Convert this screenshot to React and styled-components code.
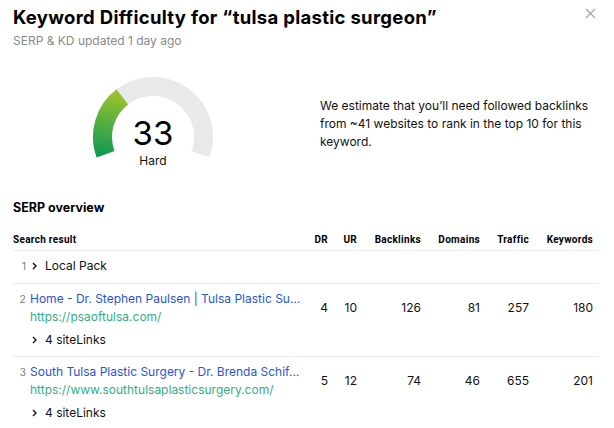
import React from "react";
import styled, { createGlobalStyle } from "styled-components";

const Global = createGlobalStyle`
  html, body { margin: 0; padding: 0; background: #fff; }
  body { font-family: Inter, "Noto Sans", sans-serif; color: #111; }
  * { box-sizing: border-box; }
`;

const Page = styled.div`
  width: 614px;
  height: 428px;
  overflow: hidden;
  padding: 4px 16px 0 13px;
  position: relative;
`;

const Title = styled.h1`
  margin: 0;
  font-family: Inter, "Liberation Sans", sans-serif;
  font-weight: 700;
  font-size: 18.5px;
  line-height: 26px;
  letter-spacing: 0.3px;
  color: #000;
`;

const Subtitle = styled.div`
  margin-top: 2px;
  font-size: 12px;
  line-height: 18px;
  color: #8a8a8a;
`;

const Close = styled.button`
  position: absolute;
  top: 8px;
  right: 18px;
  width: 11px;
  height: 11px;
  padding: 0;
  border: 0;
  background: none;
  display: flex;
`;

const Summary = styled.div`
  display: flex;
  align-items: flex-start;
  margin-top: 25px;
  padding-left: 78px;
  gap: 105px;
`;

const Gauge = styled.div`
  position: relative;
  width: 124px;
  height: 96px;
  flex: none;
`;

const Score = styled.div`
  position: absolute;
  left: 0;
  right: 0;
  top: 38px;
  text-align: center;
  font-size: 33px;
  line-height: 40px;
  color: #000;
`;

const ScoreLabel = styled.div`
  position: absolute;
  left: 0;
  right: 0;
  top: 77px;
  text-align: center;
  font-size: 12px;
  line-height: 18px;
  color: #111;
`;

const Estimate = styled.p`
  margin: 22px 0 0;
  font-size: 12px;
  line-height: 18px;
  color: #111;
  width: 280px;
`;

const SectionTitle = styled.h2`
  margin: 28px 0 0;
  font-family: Inter, "Liberation Sans", sans-serif;
  font-weight: 700;
  font-size: 12.5px;
  line-height: 18px;
  color: #000;
`;

const Table = styled.div`
  margin-top: 16px;
  width: 585px;
`;

const cols = "1fr 26px 29px 64px 59px 49px 69px";

const HeadRow = styled.div`
  display: grid;
  grid-template-columns: ${cols};
  padding-bottom: 3px;
  border-bottom: 1px solid #ececec;
`;

const HeadCell = styled.div`
  font-family: Roboto, "Liberation Sans", sans-serif;
  font-weight: 700;
  font-size: 10px;
  line-height: 14px;
  letter-spacing: 0.3px;
  color: #000;
  text-align: ${(p) => (p.$left ? "left" : "right")};
  padding-right: ${(p) => (p.$last ? "5px" : "0")};
`;

const Row = styled.div`
  display: grid;
  grid-template-columns: ${cols};
  padding: 6px 0 ${(p) => (p.$last ? "0" : "7px")};
  border-bottom: ${(p) => (p.$last ? "none" : "1px solid #ececec")};
  font-size: 12px;
  line-height: 18px;
`;

const ResultCell = styled.div`
  display: flex;
  flex-direction: column;
  min-width: 0;
`;

const ResultTop = styled.div`
  display: flex;
  align-items: baseline;
  gap: 4px;
  min-width: 0;
`;

const Pos = styled.span`
  width: 13px;
  flex: none;
  text-align: right;
  font-size: 10.5px;
  color: #808080;
`;

const Toggle = styled.span`
  display: inline-flex;
  align-items: center;
  gap: 8px;
  color: #111;
  padding-left: ${(p) => p.$indent || 0}px;
`;

const Chevron = () => (
  <svg width="5" height="8" viewBox="0 0 5 8">
    <path d="M1 1l3 3-3 3" fill="none" stroke="#111" strokeWidth="1.4" />
  </svg>
);

const Links = styled.div`
  display: flex;
  flex-direction: column;
  min-width: 0;
`;

const LinkTitle = styled.a`
  color: #2a54d6;
  text-decoration: none;
  white-space: nowrap;
  overflow: hidden;
  text-overflow: ellipsis;
`;

const Url = styled.span`
  color: #35ad87;
  white-space: nowrap;
`;

const SiteLinks = styled.div`
  margin-top: 5px;
  padding-left: 19px;
`;

const Num = styled.div`
  text-align: right;
  padding-top: 9px;
  padding-right: ${(p) => (p.$last ? "5px" : "0")};
  color: #111;
`;

const results = [
  {
    pos: 2,
    title: "Home - Dr. Stephen Paulsen | Tulsa Plastic Surgery",
    url: "https://psaoftulsa.com/",
    nums: [4, 10, 126, 81, 257, 180],
  },
  {
    pos: 3,
    title: "South Tulsa Plastic Surgery - Dr. Brenda Schiffman",
    url: "https://www.southtulsaplasticsurgery.com/",
    nums: [5, 12, 74, 46, 655, 201],
  },
];

const heads = ["DR", "UR", "Backlinks", "Domains", "Traffic", "Keywords"];

function GaugeArc() {
  return (
    <svg width="124" height="84" viewBox="0 0 124 84">
      <defs>
        <linearGradient id="kd" gradientUnits="userSpaceOnUse" x1="18" y1="82" x2="34" y2="16">
          <stop offset="0" stopColor="#0e9a55" />
          <stop offset="1" stopColor="#a6c42a" />
        </linearGradient>
      </defs>
      <path
        d="M14.55 79.27 A50.5 50.5 0 1 1 109.45 79.27"
        fill="none"
        stroke="#e8e9eb"
        strokeWidth="19"
      />
      <path
        d="M14.55 79.27 A50.5 50.5 0 0 1 31.33 21.88"
        fill="none"
        stroke="url(#kd)"
        strokeWidth="19"
      />
    </svg>
  );
}

export default function App() {
  return (
    <>
      <Global />
      <Page>
        <Title>Keyword Difficulty for “tulsa plastic surgeon”</Title>
        <Subtitle>SERP &amp; KD updated 1 day ago</Subtitle>
        <Close aria-label="Close">
          <svg width="11" height="11" viewBox="0 0 11 11">
            <path d="M1 1l9 9M10 1l-9 9" stroke="#a8a8a8" strokeWidth="1.3" />
          </svg>
        </Close>

        <Summary>
          <Gauge>
            <GaugeArc />
            <Score>33</Score>
            <ScoreLabel>Hard</ScoreLabel>
          </Gauge>
          <Estimate>
            We estimate that you’ll need followed backlinks from ~41 websites to rank in the top 10 for this keyword.
          </Estimate>
        </Summary>

        <SectionTitle>SERP overview</SectionTitle>

        <Table>
          <HeadRow>
            <HeadCell $left>Search result</HeadCell>
            {heads.map((h, i) => (
              <HeadCell key={h} $last={i === heads.length - 1}>
                {h}
              </HeadCell>
            ))}
          </HeadRow>

          <Row>
            <ResultCell>
              <ResultTop>
                <Pos>1</Pos>
                <Toggle $indent={2}>
                  <Chevron />
                  Local Pack
                </Toggle>
              </ResultTop>
            </ResultCell>
            {heads.map((h) => (
              <div key={h} />
            ))}
          </Row>

          {results.map((r, ri) => (
            <Row key={r.pos} $last={ri === results.length - 1}>
              <ResultCell>
                <ResultTop>
                  <Pos>{r.pos}</Pos>
                  <Links>
                    <LinkTitle href="#">{r.title}</LinkTitle>
                    <Url>{r.url}</Url>
                  </Links>
                </ResultTop>
                <SiteLinks>
                  <Toggle>
                    <Chevron />4 siteLinks
                  </Toggle>
                </SiteLinks>
              </ResultCell>
              {r.nums.map((n, i) => (
                <Num key={i} $last={i === r.nums.length - 1}>
                  {n}
                </Num>
              ))}
            </Row>
          ))}
        </Table>
      </Page>
    </>
  );
}
